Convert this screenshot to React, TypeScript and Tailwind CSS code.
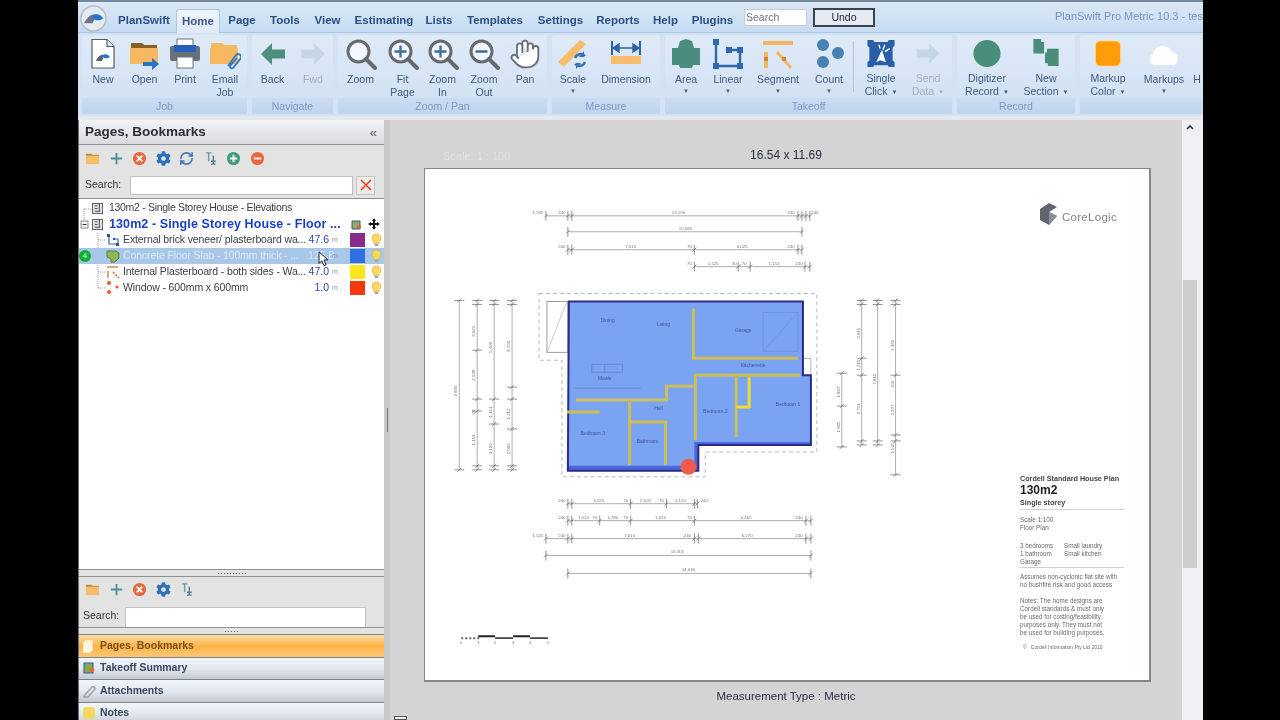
import type { ReactNode } from "react";
import { Hand, RefreshCw } from "lucide-react";
import { FaCog } from "react-icons/fa";

const UI_FONT = { fontFamily: '"Liberation Sans", Arial, sans-serif' };

function PlanLogoMark({ className }: { className?: string }) {
  return (
    <svg viewBox="0 0 28 28" className={className}>
      <circle cx="14" cy="14" r="13" fill="#e6ebf2" stroke="#b4bdc9" strokeWidth="1.5" />
      <path d="M4 19 C8 11 13 9 17 10 L13 19 Z" fill="#6d7684" />
      <path d="M13 11 C17 8 22 10 24 14 C20 17 16 16 13 14 Z" fill="#2474d8" />
    </svg>
  );
}

function Folder({ arrow, clip }: { arrow?: boolean; clip?: boolean }) {
  return (
    <svg viewBox="0 0 32 32" className="h-[32px] w-[32px]">
      <path d="M2 5 h11 l2 2 h13 v5 H2 Z" fill={clip ? "#f6b75e" : "#8b5e24"} />
      <rect x="1" y="10" width="28" height="16" rx="1" fill="#f7b862" />
      {arrow && <path d="M14 24 h9 v-4 l7 6 -7 6 v-4 h-9 Z" fill="#2a74c8" />}
      {clip && (
        <path
          d="M19 28 L27 17 a3 3 0 0 1 5 3 L24 30 a2 2 0 0 1 -3 -2 L28 20"
          fill="none"
          stroke="#2f78c4"
          strokeWidth="1.8"
        />
      )}
    </svg>
  );
}

function BigIcon({ name }: { name: string }) {
  if (name === "new")
    return (
      <svg viewBox="0 0 32 32" className="h-[32px] w-[32px]">
        <path d="M5 1.5 h15 l7 7 V30 H5 Z" fill="#fff" stroke="#545b66" strokeWidth="1.2" />
        <path d="M20 1.5 v7 h7" fill="#e4e8ee" stroke="#545b66" strokeWidth="1.2" />
        <path d="M9 23 C11 18 14 16 17 17 L15 23 Z" fill="#5a626e" />
        <path d="M15 18 C18 15 21 16 23 19 C20 21 17 21 15 18 Z" fill="#2474d8" />
      </svg>
    );
  if (name === "open") return <Folder arrow />;
  if (name === "email") return <Folder clip />;
  if (name === "print")
    return (
      <svg viewBox="0 0 32 32" className="h-[32px] w-[32px]">
        <rect x="8" y="1" width="16" height="8" fill="#fff" stroke="#6c727c" />
        <rect x="1" y="8" width="30" height="15" rx="2" fill="#6a707a" />
        <rect x="5" y="7" width="22" height="7" fill="#2460c0" />
        <rect x="8" y="19" width="16" height="11" fill="#fff" stroke="#6c727c" />
      </svg>
    );
  if (name === "back")
    return (
      <svg viewBox="0 0 32 32" className="h-[32px] w-[32px]">
        <path d="M4 16 L15 5 V11.5 H28 V20.5 H15 V27 Z" fill="#4b8f7c" />
      </svg>
    );
  if (name === "fwd" || name === "send")
    return (
      <svg viewBox="0 0 32 32" className="h-[32px] w-[32px]">
        <path d="M28 16 L17 5 V11.5 H4 V20.5 H17 V27 Z" fill="#c4d5e8" stroke="#d6e2f0" />
      </svg>
    );
  if (name === "zoom" || name === "fit" || name === "zoomin" || name === "zoomout")
    return (
      <svg viewBox="0 0 32 32" className="h-[32px] w-[32px]">
        <circle cx="13.5" cy="13.5" r="10.5" fill="#f4f7fb" stroke="#666b70" strokeWidth="3" />
        <path d="M21 21 L30 30" stroke="#666b70" strokeWidth="4" strokeLinecap="round" />
        {name !== "zoom" && <path d="M7.5 13.5 h12" stroke="#3b6ea8" strokeWidth="2.4" />}
        {(name === "zoomin" || name === "fit") && (
          <path d="M13.5 7.5 v12" stroke="#3b6ea8" strokeWidth="2.4" />
        )}
      </svg>
    );
  if (name === "pan")
    return <Hand className="h-[32px] w-[32px]" fill="#fff" stroke="#6a7078" strokeWidth={1.4} />;
  if (name === "scale")
    return (
      <svg viewBox="0 0 32 32" className="h-[32px] w-[32px]">
        <path d="M1 24 L23 2 L29 6 L7 29 Z" fill="#f5bd6c" />
        <path d="M18 20 a6 6 0 0 1 10 -2 M28 24 a6 6 0 0 1 -10 2" fill="none" stroke="#3e6fb0" strokeWidth="2.4" />
        <path d="M27 13 v6 h-5 Z M19 31 v-6 h5 Z" fill="#3e6fb0" />
      </svg>
    );
  if (name === "dimension")
    return (
      <svg viewBox="0 0 32 32" className="h-[32px] w-[32px]">
        <path d="M2 3 v14 M30 3 v14" stroke="#2d62a8" strokeWidth="2" />
        <path d="M3 10 h26 M3 10 l6 -4 v8 Z M29 10 l-6 -4 v8 Z" fill="#2d62a8" stroke="#2d62a8" strokeWidth="1.4" />
        <rect x="1" y="18" width="30" height="8" fill="#f6bd6c" />
      </svg>
    );
  if (name === "area")
    return (
      <svg viewBox="0 0 32 32" className="h-[32px] w-[32px]">
        <path d="M10 3 L16 1 L22 3 L24 10 H30 V27 H23 L22 30 H10 L9 27 H2 V10 H8 Z" fill="#4a8d7c" />
      </svg>
    );
  if (name === "linear")
    return (
      <svg viewBox="0 0 32 32" className="h-[32px] w-[32px]">
        <path d="M4 4 V28 H28 V12 H17" fill="none" stroke="#2f66ac" strokeWidth="2.4" />
        <rect x="1" y="1" width="6" height="6" fill="#2f66ac" />
        <rect x="25" y="25" width="6" height="6" fill="#2f66ac" />
        <rect x="1" y="25" width="6" height="6" fill="#2f66ac" />
        <rect x="25" y="9" width="6" height="6" fill="#2f66ac" />
        <rect x="14" y="9" width="6" height="6" fill="#2f66ac" />
      </svg>
    );
  if (name === "segment")
    return (
      <svg viewBox="0 0 32 32" className="h-[32px] w-[32px]">
        <path d="M1 5 H31" stroke="#f1b763" strokeWidth="4" />
        <path d="M4 14 V30" stroke="#f1b763" strokeWidth="4" />
        <path d="M15 14 L29 30" stroke="#f1b763" strokeWidth="3" />
        <rect x="2" y="19" width="4" height="4" fill="#c98a32" />
        <rect x="20" y="19" width="4" height="4" fill="#c98a32" />
      </svg>
    );
  if (name === "count")
    return (
      <svg viewBox="0 0 32 32" className="h-[32px] w-[32px]">
        <circle cx="10" cy="7" r="6" fill="#4682b2" />
        <circle cx="25" cy="15" r="6" fill="#4682b2" />
        <circle cx="10" cy="24" r="6" fill="#4682b2" />
      </svg>
    );
  if (name === "single")
    return (
      <svg viewBox="0 0 32 32" className="h-[32px] w-[32px]">
        <path d="M2 2 H8 L9 4 H23 L24 2 H30 V8 L28 10 V23 L30 25 V30 H24 L23 28 H9 L8 30 H2 V25 L4 23 V10 L2 8 Z" fill="#2a5fa8" />
        <path d="M17 12 L11 25 L15 23 L21 25 Z" fill="#fff" />
        <path d="M20 7 l-2 5 M25 11 l-5 3 M14 7 l1 4" stroke="#fff" strokeWidth="1.4" />
      </svg>
    );
  if (name === "digitizer")
    return (
      <svg viewBox="0 0 32 32" className="h-[32px] w-[32px]">
        <circle cx="16" cy="16" r="14" fill="#488e7b" />
      </svg>
    );
  if (name === "section")
    return (
      <svg viewBox="0 0 32 32" className="h-[32px] w-[32px]">
        <path d="M3 1 H11 V4 H14 V16 H3 Z" fill="#488e7b" />
        <path d="M17 11 H29 V29 H18 V26 H15 V15 H17 Z" fill="#488e7b" />
      </svg>
    );
  if (name === "color")
    return (
      <svg viewBox="0 0 32 32" className="h-[32px] w-[32px]">
        <rect x="3" y="3" width="26" height="26" rx="5" fill="#ff9c0a" stroke="#ffd98a" />
      </svg>
    );
  if (name === "cloud")
    return (
      <svg viewBox="0 0 32 32" className="h-[32px] w-[32px]">
        <path d="M6 27 a6 6 0 0 1 -1 -11 a10 10 0 0 1 19 -2 a7 7 0 0 1 2 13 Z" fill="#fff" />
      </svg>
    );
  return <div className="h-[32px] w-[12px]" />;
}

function RibbonButton({
  icon,
  label,
  width,
  arrow,
  faded,
  inlineArrow,
}: {
  icon: string;
  label: string[];
  width: number;
  arrow?: boolean;
  faded?: boolean;
  inlineArrow?: boolean;
}) {
  return (
    <div className="flex shrink-0 flex-col items-center pt-[3px]" style={{ width }}>
      <BigIcon name={icon} />
      <div
        className={`mt-[3px] text-center text-[10.5px] leading-[12.5px] ${
          faded ? "text-[#a3b1c2]" : "text-[#40597c]"
        }`}
      >
        {label.map((l, i) => (
          <div key={l}>
            {l}
            {inlineArrow && i === label.length - 1 && <span className="ml-1 text-[6px] align-middle">▼</span>}
          </div>
        ))}
        {arrow && <div className="text-[6px] leading-[10px] text-[#4f5f73]">▼</div>}
      </div>
    </div>
  );
}

function RibbonGroup({
  title,
  width,
  children,
}: {
  title: string;
  width: number;
  children: ReactNode;
}) {
  return (
    <div
      className="flex h-[81px] shrink-0 flex-col overflow-hidden rounded-[3px] border border-[#d3e1f1] bg-gradient-to-b from-[#dfeaf7] to-[#cfe0f3]"
      style={{ width }}
    >
      <div className="flex flex-1 overflow-hidden">{children}</div>
      <div className="h-[16px] bg-gradient-to-b from-[#cbdcf1] to-[#bfd5ee] text-center text-[10.5px] leading-[16px] text-[#7d9ac0]">
        {title}
      </div>
    </div>
  );
}

const TABS = [
  { label: "PlanSwift", w: 64 },
  { label: "Home", w: 44, active: true },
  { label: "Page", w: 44 },
  { label: "Tools", w: 42 },
  { label: "View", w: 43 },
  { label: "Estimating", w: 70 },
  { label: "Lists", w: 40 },
  { label: "Templates", w: 72 },
  { label: "Settings", w: 59 },
  { label: "Reports", w: 56 },
  { label: "Help", w: 39 },
  { label: "Plugins", w: 55 },
];

function Ribbon() {
  return (
    <div className="shrink-0">
      <div className="flex h-[33px] items-end border-t-2 border-b border-t-[#76879c] border-b-[#a9c6e6] bg-gradient-to-b from-[#dbe8f7] to-[#c6dcf3]">
        <div className="flex h-full w-[34px] shrink-0 items-center pl-[2px] pt-[3px]">
          <PlanLogoMark className="h-[27px] w-[27px]" />
        </div>
        {TABS.map((t) => (
          <div
            key={t.label}
            style={{ width: t.w }}
            className={`shrink-0 text-center text-[11.5px] font-bold ${
              t.active
                ? "-mb-px h-[24px] rounded-t-[3px] border border-b-0 border-[#a9c6e6] bg-gradient-to-b from-[#eef5fc] to-[#dfeaf7] pt-[1px] leading-[20px] text-[#3e5a80]"
                : "h-[22px] leading-[21px] text-[#2b4f82]"
            }`}
          >
            {t.label}
          </div>
        ))}
        <div className="ml-[4px] mb-[6px] h-[17px] w-[63px] shrink-0 border border-[#c6ccd4] bg-white pl-[1px] text-[10.5px] leading-[15px] text-[#6c7480]">
          Search
        </div>
        <div className="ml-[6px] mb-[5px] h-[19px] w-[62px] shrink-0 border-2 border-[#3b4452] bg-[#e6ebf2] text-center text-[10.5px] leading-[15px] text-[#1c2430]">
          Undo
        </div>
        <div className="mb-[9px] ml-auto w-[148px] shrink-0 whitespace-nowrap text-[11px] leading-[14px] text-[#7a93b6]">
          PlanSwift Pro Metric 10.3 - tes
        </div>
      </div>
      <div className="flex h-[83px] gap-[3px] overflow-hidden bg-[#d3e3f5] pl-[3px] pt-px">
        <RibbonGroup title="Job" width={167}>
          <RibbonButton icon="new" label={["New"]} width={42} />
          <RibbonButton icon="open" label={["Open"]} width={41} />
          <RibbonButton icon="print" label={["Print"]} width={40} />
          <RibbonButton icon="email" label={["Email", "Job"]} width={40} />
        </RibbonGroup>
        <RibbonGroup title="Navigate" width={83}>
          <RibbonButton icon="back" label={["Back"]} width={41} />
          <RibbonButton icon="fwd" label={["Fwd"]} width={40} faded />
        </RibbonGroup>
        <RibbonGroup title="Zoom / Pan" width={211}>
          <RibbonButton icon="zoom" label={["Zoom"]} width={45} />
          <RibbonButton icon="fit" label={["Fit", "Page"]} width={39} />
          <RibbonButton icon="zoomin" label={["Zoom", "In"]} width={41} />
          <RibbonButton icon="zoomout" label={["Zoom", "Out"]} width={42} />
          <RibbonButton icon="pan" label={["Pan"]} width={40} />
        </RibbonGroup>
        <RibbonGroup title="Measure" width={110}>
          <RibbonButton icon="scale" label={["Scale"]} width={42} arrow />
          <RibbonButton icon="dimension" label={["Dimension"]} width={64} />
        </RibbonGroup>
        <RibbonGroup title="Takeoff" width={289}>
          <RibbonButton icon="area" label={["Area"]} width={42} arrow />
          <RibbonButton icon="linear" label={["Linear"]} width={42} arrow />
          <RibbonButton icon="segment" label={["Segment"]} width={58} arrow />
          <RibbonButton icon="count" label={["Count"]} width={44} arrow />
          <div className="mx-[2px] my-[6px] w-px bg-[#b2c6dc]" />
          <RibbonButton icon="single" label={["Single", "Click"]} width={50} inlineArrow />
          <RibbonButton icon="send" label={["Send", "Data"]} width={44} faded inlineArrow />
        </RibbonGroup>
        <RibbonGroup title="Record" width={120}>
          <RibbonButton icon="digitizer" label={["Digitizer", "Record"]} width={60} inlineArrow />
          <RibbonButton icon="section" label={["New", "Section"]} width={58} inlineArrow />
        </RibbonGroup>
        <RibbonGroup title="" width={124}>
          <RibbonButton icon="color" label={["Markup", "Color"]} width={56} inlineArrow />
          <RibbonButton icon="cloud" label={["Markups"]} width={56} arrow />
          <RibbonButton icon="none" label={["H"]} width={10} />
        </RibbonGroup>
      </div>
    </div>
  );
}

function SmallFolder() {
  return (
    <svg viewBox="0 0 16 16" className="h-[15px] w-[15px]">
      <path d="M1 3 h6 l1 1 h7 v2 H1 Z" fill="#b98a3e" />
      <rect x="1" y="5" width="14" height="9" fill="#f7bd68" />
    </svg>
  );
}

function PlusIcon() {
  return (
    <svg viewBox="0 0 16 16" className="h-[15px] w-[15px]">
      <path d="M8 2 V14 M2 8 H14" stroke="#4d8f9c" strokeWidth="2" />
    </svg>
  );
}

function RoundIcon({ color, mark }: { color: string; mark: "x" | "plus" | "minus" }) {
  return (
    <svg viewBox="0 0 16 16" className="h-[15px] w-[15px]">
      <circle cx="8" cy="8" r="7" fill={color} />
      {mark === "x" && <path d="M5 5 L11 11 M11 5 L5 11" stroke="#fff" strokeWidth="2" />}
      {mark !== "x" && <path d="M4 8 H12" stroke="#fff" strokeWidth="2" />}
      {mark === "plus" && <path d="M8 4 V12" stroke="#fff" strokeWidth="2" />}
    </svg>
  );
}

function SortIcon() {
  return (
    <svg viewBox="0 0 16 16" className="h-[15px] w-[15px]">
      <path d="M3 2 H9 M6 2 V11" stroke="#6c9aa6" strokeWidth="1.5" />
      <path d="M11 5 V14 M8.5 14 H13.5 M8.5 11 H13.5" stroke="#4f7f96" strokeWidth="1.5" />
    </svg>
  );
}

function Toolbar({ full }: { full?: boolean }) {
  return (
    <div className="flex h-[24px] items-center gap-[8.5px] pl-[6px]">
      <SmallFolder />
      <PlusIcon />
      <RoundIcon color="#e8673c" mark="x" />
      <FaCog className="h-[15px] w-[15px] text-[#2f70b8]" />
      {full && <RefreshCw className="h-[15px] w-[15px] text-[#3f78b8]" strokeWidth={2.6} />}
      <SortIcon />
      {full && <RoundIcon color="#3f9a80" mark="plus" />}
      {full && <RoundIcon color="#e8673c" mark="minus" />}
    </div>
  );
}

function PageIcon() {
  return (
    <svg viewBox="0 0 12 12" className="h-[11px] w-[11px] shrink-0">
      <rect x="0.5" y="0.5" width="11" height="11" fill="#dfe2e6" stroke="#55595f" />
      <path d="M3 3 H6 M3 6 H6 M3 9 H9 M8 1 V9" stroke="#3c4046" />
    </svg>
  );
}

function RowIcon({ kind }: { kind: string }) {
  if (kind === "line")
    return (
      <svg viewBox="0 0 14 14" className="h-[14px] w-[14px] shrink-0">
        <path d="M3 2 V11 H12 V6 H8" fill="none" stroke="#3868b0" strokeWidth="1.2" />
        <path d="M1 1 h3 v3 h-3 Z M10 10 h3 v3 h-3 Z M7 5 h2 v2 h-2 Z" fill="#2f4f9c" />
      </svg>
    );
  if (kind === "area")
    return (
      <svg viewBox="0 0 14 14" className="h-[14px] w-[14px] shrink-0">
        <path d="M1 2 H10 L13 4 V9 L9 13 H5 V10 L1 8 Z" fill="#8db858" stroke="#5d8038" />
      </svg>
    );
  if (kind === "segment")
    return (
      <svg viewBox="0 0 14 14" className="h-[14px] w-[14px] shrink-0">
        <path d="M1 2 H12" stroke="#c89044" strokeWidth="1.5" />
        <path d="M2 6 V13" stroke="#c89044" strokeWidth="1.5" />
        <path d="M7 7 L13 13" stroke="#d06030" strokeWidth="1.5" strokeDasharray="2 1.5" />
      </svg>
    );
  return (
    <svg viewBox="0 0 14 14" className="h-[14px] w-[14px] shrink-0">
      <circle cx="3" cy="2" r="2" fill="#ee5a30" />
      <circle cx="3" cy="11" r="2" fill="#ee5a30" />
      <circle cx="11" cy="6" r="1.6" fill="#ee5a30" />
    </svg>
  );
}

function Bulb() {
  return (
    <svg viewBox="0 0 12 16" className="h-[14px] w-[11px] shrink-0">
      <path d="M6 1 a5 5 0 0 1 3 9 v2 H3 v-2 a5 5 0 0 1 3 -9 Z" fill="#fbd860" stroke="#d9a93a" strokeWidth="0.7" />
      <rect x="4" y="12.5" width="4" height="2.5" fill="#a8a8a0" />
    </svg>
  );
}

const TAKEOFFS = [
  { icon: "line", text: "External brick veneer/ plasterboard wa...", value: "47.6", color: "#8a2a8a" },
  { icon: "area", text: "Concrete Floor Slab - 100mm thick - ...", value: "125.8", color: "#2f6fe0", selected: true },
  { icon: "segment", text: "Internal Plasterboard - both sides - Wa...", value: "47.0", color: "#ffe51e" },
  { icon: "count", text: "Window - 600mm x 600mm", value: "1.0", color: "#f6360f" },
];

function Tree() {
  return (
    <div className="relative min-h-0 flex-1 overflow-hidden border-y border-[#8e9196] bg-white pt-[1px] text-[10.5px]">
      <svg className="absolute left-0 top-0 h-[100px] w-[30px]" viewBox="0 0 30 100">
        <path d="M5 10 V25 M5 10 H13 M19 34 V90 M19 41 H27 M19 73 H27 M19 89 H27" stroke="#9a9a9a" strokeDasharray="1 1" fill="none" />
        <rect x="2" y="22" width="7" height="7" fill="#f4f4f4" stroke="#8a8a8a" />
        <path d="M3.5 25.5 H7.5" stroke="#333" />
      </svg>
      <div className="flex h-[16px] items-center pl-[13px] text-[#3a3e46]">
        <PageIcon />
        <span className="ml-[6px] whitespace-nowrap tracking-[-0.3px]">130m2 - Single Storey House - Elevations</span>
      </div>
      <div className="flex h-[16px] items-center pl-[13px]">
        <PageIcon />
        <span className="ml-[6px] w-[233px] whitespace-nowrap text-[12.5px] font-bold tracking-[0.1px] text-[#1b3fc4]">
          130m2 - Single Storey House - Floor ...
        </span>
        <svg viewBox="0 0 12 12" className="ml-[8px] h-[12px] w-[12px] shrink-0">
          <path d="M2 3 H10 V11 H2 Z" fill="#9aa860" stroke="#2f5f9f" />
          <circle cx="9" cy="9" r="2" fill="#d06030" />
        </svg>
        <svg viewBox="0 0 12 12" className="ml-[6px] h-[12px] w-[12px] shrink-0">
          <path d="M6 0 L8 3 H7 V5 H9 V4 L12 6 L9 8 V7 H7 V9 H8 L6 12 L4 9 H5 V7 H3 V8 L0 6 L3 4 V5 H5 V3 H4 Z" fill="#111" />
        </svg>
      </div>
      {TAKEOFFS.map((t) => (
        <div
          key={t.text}
          className={`relative flex h-[16px] items-center pl-[27px] ${
            t.selected ? "bg-[#a8c8ea] text-[#dbe8f5]" : "text-[#3a3e46]"
          }`}
        >
          {t.selected && (
            <span className="absolute left-0 top-[2px] grid h-[12px] w-[12px] place-items-center rounded-full bg-[#10b030] text-[8px] leading-none text-white">
              4
            </span>
          )}
          <RowIcon kind={t.icon} />
          <span className="ml-[3px] w-[185px] shrink-0 overflow-hidden whitespace-nowrap tracking-[-0.12px]">{t.text}</span>
          <span className={`w-[21px] shrink-0 text-right ${t.selected ? "" : "text-[#2a4ab4]"}`}>{t.value}</span>
          <span className="ml-[3px] w-[10px] shrink-0 text-[7px] text-[#8a93a8]">m</span>
          <span className="ml-[8px] h-[14px] w-[15px] shrink-0" style={{ backgroundColor: t.color }} />
          <span className="ml-[6px]">
            <Bulb />
          </span>
        </div>
      ))}
      <svg viewBox="0 0 12 18" className="absolute left-[239px] top-[52px] h-[16px] w-[11px]">
        <path d="M1 1 V14 L4 11 L6.5 16.5 L9 15.5 L6.5 10 H11 Z" fill="#fff" stroke="#111" />
      </svg>
    </div>
  );
}

function Grip({ count }: { count: number }) {
  return (
    <div className="flex h-[6px] items-center justify-center gap-[2px]">
      {Array.from({ length: count }).map((_, i) => (
        <span key={i} className="h-px w-px bg-[#5c5c5c]" />
      ))}
    </div>
  );
}

const ACCORDION = [
  { label: "Pages, Bookmarks", active: true },
  { label: "Takeoff Summary" },
  { label: "Attachments" },
  { label: "Notes" },
];

function AccIcon({ label }: { label: string }) {
  if (label === "Pages, Bookmarks")
    return (
      <svg viewBox="0 0 14 14" className="h-[14px] w-[14px]">
        <rect x="3" y="1" width="8" height="11" fill="#ffe9c4" />
        <rect x="1" y="3" width="8" height="11" fill="#fff4e0" />
      </svg>
    );
  if (label === "Takeoff Summary")
    return (
      <svg viewBox="0 0 14 14" className="h-[14px] w-[14px]">
        <rect x="2" y="2" width="9" height="10" fill="#8aa850" stroke="#2f5f9f" />
        <circle cx="10" cy="9" r="2.4" fill="#e06a30" />
      </svg>
    );
  if (label === "Attachments")
    return (
      <svg viewBox="0 0 14 14" className="h-[14px] w-[14px]">
        <path d="M2 12 L10 3 a2 2 0 0 1 3 2 L6 13 H2 Z" fill="none" stroke="#9ea2a8" strokeWidth="1.6" />
      </svg>
    );
  return (
    <svg viewBox="0 0 14 14" className="h-[14px] w-[14px]">
      <rect x="1" y="1" width="12" height="12" rx="3" fill="#f4d860" />
    </svg>
  );
}

function LeftPanel() {
  return (
    <div className="flex w-[306px] shrink-0 flex-col border-l border-[#6c7076] bg-[#e3e3e3] text-[#2e333b]">
      <div className="flex h-[25px] shrink-0 items-center justify-between border-b border-[#8e9196] bg-gradient-to-b from-[#f2f3f6] to-[#d9dbdf] pl-[6px] pr-[7px]">
        <span className="text-[13.5px] font-bold text-[#2a2e36]">Pages, Bookmarks</span>
        <span className="text-[13px] leading-none text-[#4c5a70]">«</span>
      </div>
      <div className="pt-px">
        <Toolbar full />
      </div>
      <div className="flex h-[28px] shrink-0 items-center pl-[6px] pt-[2px]">
        <span className="w-[45px] text-[10.5px]">Search:</span>
        <div className="h-[19px] w-[223px] border border-[#bdbdbd] bg-white" />
        <div className="ml-[3px] grid h-[19px] w-[19px] place-items-center border border-[#c4c4c4] bg-[#ececec]">
          <svg viewBox="0 0 12 12" className="h-[12px] w-[12px]">
            <path d="M1 1 L11 11 M11 1 L1 11" stroke="#e8401c" strokeWidth="1.6" />
          </svg>
        </div>
      </div>
      <Tree />
      <Grip count={10} />
      <div className="shrink-0 border-t border-[#8e9196]">
        <Toolbar />
      </div>
      <div className="flex h-[26px] shrink-0 items-end pl-[4px]">
        <span className="mb-[3px] w-[42px] text-[10.5px]">Search:</span>
        <div className="h-[20px] w-[241px] border border-[#c4c4c4] border-b-0 bg-white" />
      </div>
      <div className="shrink-0 border-t border-[#8e9196]">
        <Grip count={5} />
      </div>
      <div className="h-[86px] shrink-0 overflow-hidden">
        {ACCORDION.map((a) => (
          <div
            key={a.label}
            className={`flex h-[22.5px] items-center gap-[4px] border-t border-[#7e8288] pl-[3px] text-[10.5px] font-bold ${
              a.active
                ? "bg-gradient-to-b from-[#ffdca0] via-[#fdb443] to-[#fcc678] text-[#75521c]"
                : "bg-gradient-to-b from-[#f2f6fc] via-[#e2e8f0] to-[#c5cad2] text-[#3c4660]"
            }`}
          >
            <AccIcon label={a.label} />
            {a.label}
          </div>
        ))}
      </div>
    </div>
  );
}

type Dim = { y: number; x1: number; x2: number; ticks: number[]; labels: [number, string][] };

const H_DIMS: Dim[] = [
  { y: 215, x1: 545, x2: 810, ticks: [545, 567, 571, 798, 802, 806, 810], labels: [[537, "1,935"], [561, "240"], [678, "13,190"], [791, "240"], [815, "240"]] },
  { y: 231, x1: 567, x2: 802, ticks: [567, 802], labels: [[685, "15,585"]] },
  { y: 249, x1: 567, x2: 802, ticks: [567, 571, 694, 798, 802], labels: [[561, "240"], [630, "7,010"], [689, "70"], [742, "6,025"], [791, "240"]] },
  { y: 266, x1: 694, x2: 810, ticks: [694, 738, 750, 805, 810], labels: [[689, "70"], [713, "1,525"], [734, "30"], [744, "70"], [774, "1,151"], [799, "240"]] },
  { y: 504, x1: 567, x2: 697, ticks: [567, 571, 630, 666, 694, 697], labels: [[561, "240"], [598, "3,525"], [625, "70"], [645, "2,020"], [661, "70"], [680, "1,120"], [704, "240"]] },
  { y: 521, x1: 567, x2: 811, ticks: [567, 571, 599, 630, 694, 806, 811], labels: [[561, "240"], [583, "1,510"], [594, "70"], [612, "1,780"], [625, "70"], [660, "1,613"], [689, "70"], [746, "6,465"], [799, "240"]] },
  { y: 539, x1: 545, x2: 811, ticks: [545, 567, 571, 694, 698, 806, 811], labels: [[537, "1,525"], [561, "240"], [629, "7,010"], [687, "240"], [747, "6,270"], [799, "240"]] },
  { y: 556, x1: 545, x2: 811, ticks: [545, 811], labels: [[677, "16,305"]] },
  { y: 574, x1: 567, x2: 811, ticks: [567, 811], labels: [[688, "14,030"]] },
];

const V_DIMS: Dim[] = [
  { y: 458, x1: 300, x2: 470, ticks: [300, 470], labels: [[391, "9,890"]] },
  { y: 476, x1: 300, x2: 470, ticks: [300, 304, 350, 399, 411, 466, 470], labels: [[331, "3,021"], [375, "2,038"], [412, "70"], [440, "1,151"]] },
  { y: 493, x1: 300, x2: 470, ticks: [300, 304, 399, 424, 466, 470], labels: [[347, "5,400"], [412, "1,151"], [449, "3,190"]] },
  { y: 511, x1: 300, x2: 470, ticks: [300, 304, 387, 399, 429, 466, 470], labels: [[346, "8,700"], [414, "1,212"], [449, "2,000"]] },
  { y: 842, x1: 373, x2: 447, ticks: [373, 406, 447], labels: [[392, "1,867"], [427, "1,865"]] },
  { y: 862, x1: 300, x2: 445, ticks: [300, 304, 358, 375, 441, 445], labels: [[333, "3,015"], [365, "1,215"], [409, "3,751"]] },
  { y: 878, x1: 300, x2: 445, ticks: [300, 304, 441, 445], labels: [[379, "7,810"]] },
  { y: 896, x1: 300, x2: 475, ticks: [300, 304, 375, 435, 441, 475], labels: [[345, "4,365"], [384, "240"], [410, "3,207"], [448, "1,525"]] },
];

function Dimensions() {
  return (
    <g stroke="#8a8a8a" strokeWidth="0.7" fontFamily="Liberation Sans, sans-serif">
      {H_DIMS.map((d) => (
        <g key={d.y}>
          <path d={`M${d.x1} ${d.y} H${d.x2}`} />
          {d.ticks.map((t) => (
            <path key={t} d={`M${t} ${d.y - 5} V${d.y + 5} M${t - 2} ${d.y + 2} L${t + 2} ${d.y - 2}`} stroke="#666" />
          ))}
          {d.labels.map(([x, s]) => (
            <text key={x} x={x} y={d.y - 2} fontSize="4.4" textAnchor="middle" stroke="none" fill="#777">
              {s}
            </text>
          ))}
        </g>
      ))}
      {V_DIMS.map((d) => (
        <g key={d.y}>
          <path d={`M${d.y} ${d.x1} V${d.x2}`} />
          {d.ticks.map((t) => (
            <path key={t} d={`M${d.y - 5} ${t} H${d.y + 5} M${d.y - 2} ${t + 2} L${d.y + 2} ${t - 2}`} stroke="#666" />
          ))}
          {d.labels.map(([x, s]) => (
            <text
              key={x}
              transform={`translate(${d.y - 2} ${x}) rotate(-90)`}
              fontSize="4.4"
              textAnchor="middle"
              stroke="none"
              fill="#777"
            >
              {s}
            </text>
          ))}
        </g>
      ))}
    </g>
  );
}

const ROOMS: [number, number, string][] = [
  [607, 322, "Dining"],
  [663, 326, "Living"],
  [743, 332, "Garage"],
  [753, 367, "Kitchenette"],
  [788, 406, "Bedroom 1"],
  [715, 413, "Bedroom 2"],
  [592, 435, "Bedroom 3"],
  [647, 443, "Bathroom"],
  [658, 410, "Hall"],
  [604, 380, "Meals"],
];

const WALLS = [
  "M693 308 V358 H798",
  "M695 440 V375 H800",
  "M693 386 H666 V400 H575",
  "M566 412 H599",
  "M629 402 V465",
  "M629 422 H665 V465",
  "M736 377 V437",
];

function FloorPlan() {
  return (
    <svg viewBox="424 168 726 513" className="h-full w-full">
      <Dimensions />
      <path
        d="M538 293 H817 V452 H705 V477 H561 V360 H538 Z"
        fill="none"
        stroke="#a8a8a8"
        strokeWidth="0.8"
        strokeDasharray="4 3"
      />
      <rect x="546" y="301" width="21" height="51" fill="#fff" stroke="#777" strokeWidth="0.7" />
      <path d="M546 352 L566 301" stroke="#aaa" strokeWidth="0.6" />
      <rect x="803" y="358" width="8" height="17" fill="#fff" stroke="#888" strokeWidth="0.6" />
      <path d="M568 301 H803 V375 H811 V445 H698 V471 H567 Z" fill="#7aa3f2" />
      <path d="M567 466 H694 V442 H811 V445 H698 V471 H567 Z" fill="#4a68dc" />
      <path d="M568 301 H803 V375 H811 V445 H698 V471 H567 Z" fill="none" stroke="#2c2a86" strokeWidth="2" />
      {ROOMS.map(([x, y, s]) => (
        <text key={s} x={x} y={y} fontSize="5" textAnchor="middle" fill="#3f5596" fontFamily="Liberation Sans, sans-serif">
          {s}
        </text>
      ))}
      <path d="M763 312 H798 V351 H763 Z M763 351 L798 312" fill="none" stroke="#6486c8" strokeWidth="0.5" />
      <path d="M574 388 H640 M591 364 H622 V372 H591 Z M604 364 V372" fill="none" stroke="#5a78bc" strokeWidth="0.6" />
      {WALLS.map((d) => (
        <path key={d} d={d} fill="none" stroke="#cdbf56" strokeWidth="3" />
      ))}
      <path d="M749 377 V407 H736" fill="none" stroke="#f2dc2a" strokeWidth="3" />
      <circle cx="688" cy="467" r="8" fill="#ee5b4a" />
      <g fontFamily="Liberation Sans, sans-serif">
        <path d="M460 639 H478 " stroke="#666" strokeWidth="2" strokeDasharray="2 2" />
        <path d="M477 637 H494 M512 637 H529" stroke="#222" strokeWidth="2" />
        <path d="M494 639 H512 M529 639 H547" stroke="#444" strokeWidth="1.6" />
        {[460, 477, 494, 512, 529, 547].map((x, i) => (
          <text key={x} x={x} y={645} fontSize="3.6" textAnchor="middle" fill="#666">
            {i}
          </text>
        ))}
      </g>
    </svg>
  );
}

function CoreLogicMark() {
  return (
    <div className="absolute right-[32px] top-[33px] flex items-start gap-[3px]">
      <svg viewBox="0 0 20 24" className="h-[24px] w-[20px]">
        <path d="M1 7 L10 1 L18 5 L10 10 L18 14 L10 23 L1 18 Z" fill="#5f6470" />
        <path d="M10 10 L18 14 L10 23 Z" fill="#8b8f98" />
      </svg>
      <span className="mt-[8px] text-[11.5px] leading-[14px] tracking-[0.3px] text-[#80848c]">CoreLogic</span>
    </div>
  );
}

function TitleBlock() {
  return (
    <div className="absolute left-[595px] top-[305px] w-[104px] text-[6.3px] leading-[8px] text-[#6a6a6a]">
      <div className="text-[7.2px] font-bold leading-[9px] text-[#444]">Cordell Standard House Plan</div>
      <div className="text-[12px] font-bold leading-[14px] text-[#222]">130m2</div>
      <div className="mt-[2px] border-b border-[#d0d0d0] pb-[2px] text-[7.2px] font-bold text-[#444]">Single storey</div>
      <div className="mt-[6px]">Scale 1:100</div>
      <div>Floor Plan</div>
      <div className="mt-[10px] grid grid-cols-[44px_1fr]">
        <span>3 bedrooms</span>
        <span>Small laundry</span>
        <span>1 bathroom</span>
        <span>Small kitchen</span>
        <span>Garage</span>
      </div>
      <div className="mt-[1px] border-t border-[#d0d0d0] pt-[5px]">
        Assumes non-cyclonic flat site with
        <br />
        no bushfire risk and good access
      </div>
      <div className="mt-[8px]">
        Notes: The home designs are
        <br />
        Cordell standards &amp; must only
        <br />
        be used for costing/feasibility
        <br />
        purposes only. They must not
        <br />
        be used for building purposes.
      </div>
      <div className="mt-[6px] pl-[3px] text-[5px]">©&nbsp;&nbsp;&nbsp;Cordell Information Pty Ltd 2010</div>
    </div>
  );
}

function Canvas() {
  return (
    <div className="relative flex min-w-0 flex-1 flex-col items-center bg-[#d4d4d4] text-[#2a3040]">
      <div className="flex h-[48px] w-full shrink-0 items-end justify-center pb-[4px] text-[12px]">
        16.54 x 11.69
      </div>
      <span className="absolute left-[53px] top-[28px] text-[11px] text-[#e2e2e2]">Scale: 1 : 100</span>
      <div className="relative ml-[3px] h-[514px] w-[727px] shrink-0 border-r-2 border-b-2 border-l border-t border-[#84878a] bg-white">
        <FloorPlan />
        <CoreLogicMark />
        <TitleBlock />
      </div>
      <div className="pt-[6px] text-[11.5px]">Measurement Type : Metric</div>
      <div className="absolute bottom-0 left-[4px] h-[4px] w-[13px] border border-[#555] bg-[#eee]" />
    </div>
  );
}

function ScrollBar() {
  return (
    <div className="flex w-[21px] shrink-0 flex-col bg-[#eef0f4] pl-[1px] pr-[6px]">
      <svg viewBox="0 0 14 14" className="h-[14px] w-[14px]">
        <path d="M4 9 L7 6 L10 9" fill="none" stroke="#333" strokeWidth="1.6" />
      </svg>
      <div className="mt-[146px] h-[288px] bg-[#cdcdcd]" />
    </div>
  );
}

export default function App() {
  return (
    <div className="h-[720px] w-[1280px] overflow-hidden bg-black pl-[78px] pr-[77px] blur-[0.35px]" style={UI_FONT}>
      <div className="flex h-full flex-col bg-[#e6e8ec]">
        <Ribbon />
        <div className="mt-[4px] flex min-h-0 flex-1">
          <LeftPanel />
          <div className="flex w-[6px] shrink-0 items-center bg-[#c9c9c9]">
            <div className="mx-auto h-[24px] w-px bg-[#777]" />
          </div>
          <Canvas />
          <ScrollBar />
        </div>
      </div>
    </div>
  );
}
